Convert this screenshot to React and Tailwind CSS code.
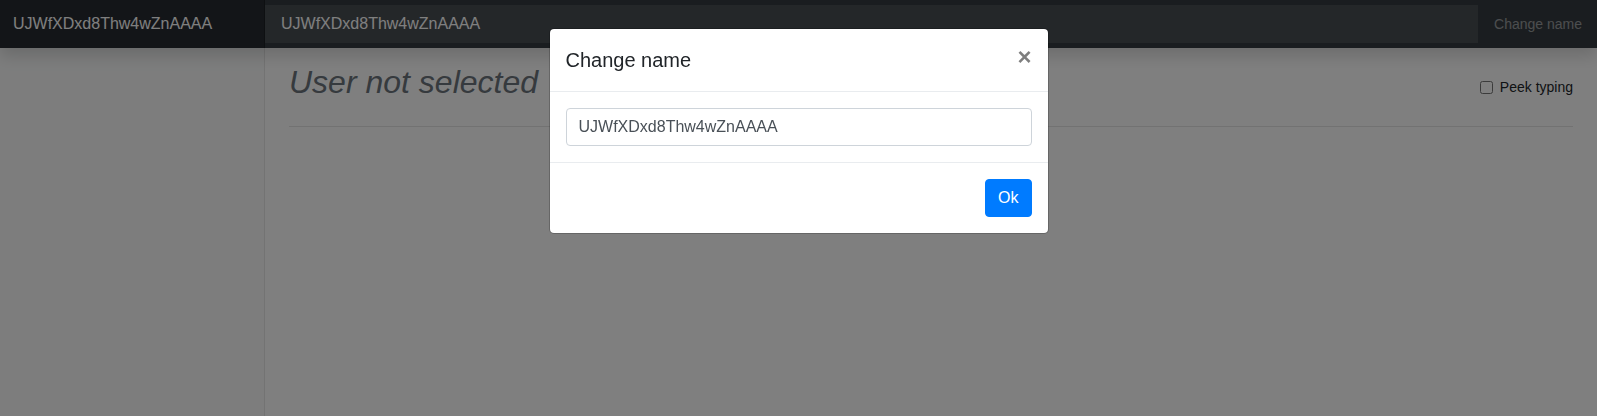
import React, { useState } from 'react';

const FONT = "font-['Liberation_Sans',Arial,sans-serif]";

const ChangeNameModal = ({ name, onChange }) => {
  return (
    <div className="fixed inset-0 z-50 bg-black/50">
      <div className="flex justify-center">
        <div className="mt-[28px] w-[500px] rounded-[5px] border border-black/20 bg-white bg-clip-padding text-[#212529]">
          <div className="flex items-start justify-between border-b border-[#e9ecef] p-4">
            <h5 className="text-[20px] leading-[30px] font-normal">Change name</h5>
            <button
              className="-m-4 ml-auto p-4 text-[24px] leading-none font-bold text-black opacity-50 [text-shadow:0_1px_0_#fff]"
            >
              ×
            </button>
          </div>
          <div className="p-4">
            <input
              value={name}
              onChange={e => onChange(e.target.value)}
              className="block h-[38px] w-full rounded-[4px] border border-[#ced4da] px-3 py-[6px] text-[16px] leading-6 text-[#495057] outline-none"
            />
          </div>
          <div className="flex justify-end border-t border-[#e9ecef] p-4">
            <button className="h-[38px] rounded-[4px] border border-[#007bff] bg-[#007bff] px-3 text-[16px] leading-6 text-white">
              Ok
            </button>
          </div>
        </div>
      </div>
    </div>
  );
};

const App = () => {
  const [name, setName] = useState('UJWfXDxd8Thw4wZnAAAA');

  return (
    <div className={`${FONT} relative flex h-screen w-full flex-col overflow-hidden bg-white`}>
      {/* top navbar */}
      <nav className="relative z-10 flex h-[48px] shrink-0 items-stretch bg-[#343a40] shadow-[0_8px_16px_rgba(0,0,0,0.15)]">
        <div className="flex w-[265px] shrink-0 items-center bg-black/25 pl-[13px] text-[16px] text-white shadow-[inset_-1px_0_0_rgba(0,0,0,0.25)]">
          {name}
        </div>
        <div className="flex flex-1 items-center">
          <div className="mb-[5px] mt-[5px] flex h-[38px] w-full items-center bg-white/10 px-4 text-[16px] text-white">
            {name}
          </div>
        </div>
        <a className="flex shrink-0 items-center px-4 pr-[15px] text-[14px] text-white/50">
          Change name
        </a>
      </nav>

      <div className="flex flex-1">
        {/* sidebar */}
        <aside className="w-[265px] shrink-0 border-r border-[#e6e6e6] bg-[#fafbfb]" />

        {/* main */}
        <main className="flex-1 px-6 pt-[15px]">
          <div className="flex items-start justify-between">
            <h2 className="text-[32px] leading-[38px] italic font-normal text-[#6c757d]">
              User not selected
            </h2>
            <label className="mt-[14px] flex items-center text-[14px] leading-[21px] text-[#212529]">
              <input type="checkbox" className="mr-[7px] h-[13px] w-[13px]" />
              Peek typing
            </label>
          </div>
          <hr className="mt-[25px] border-t border-black/10" />
        </main>
      </div>

      <ChangeNameModal name={name} onChange={setName} />
    </div>
  );
};

export default App;
